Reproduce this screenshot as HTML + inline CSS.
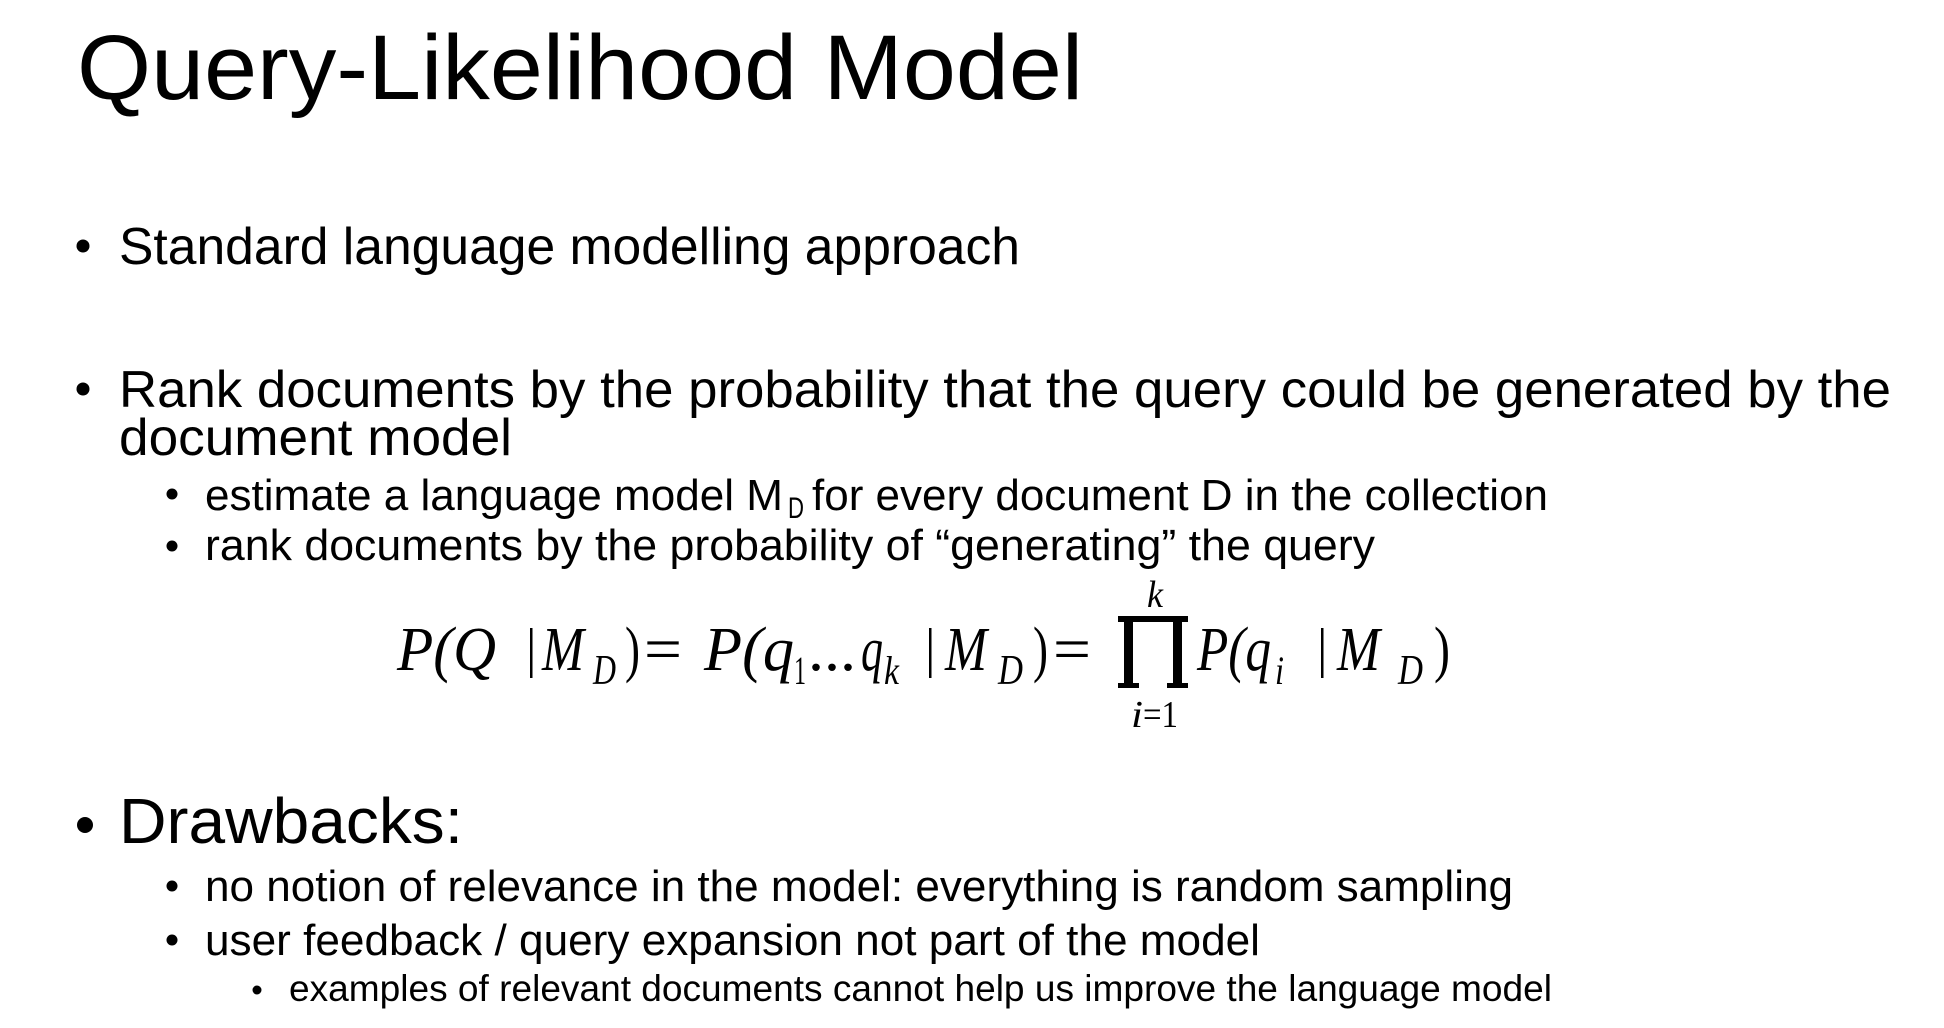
<!DOCTYPE html>
<html><head><meta charset="utf-8"><style>
html,body{margin:0;padding:0;background:#fff;}
svg{display:block}
.s{font-family:"Liberation Sans",sans-serif;fill:#000}
.m{font-family:"Liberation Serif",serif;font-style:italic;fill:#000}
.r{font-family:"Liberation Serif",serif;fill:#000}
</style></head><body>
<svg width="1944" height="1028" viewBox="0 0 1944 1028" xmlns="http://www.w3.org/2000/svg">
<rect width="1944" height="1028" fill="#fff"/>
<text class="s" x="77" y="99" font-size="92" textLength="1006" lengthAdjust="spacingAndGlyphs" style="font-weight:300">Query-Likelihood Model</text>

<circle cx="83" cy="246" r="6.5"/>
<text class="s" x="119" y="264" font-size="52" textLength="901" lengthAdjust="spacingAndGlyphs">Standard language modelling approach</text>

<circle cx="83" cy="389" r="6.5"/>
<text class="s" x="119" y="407" font-size="52" textLength="1772" lengthAdjust="spacingAndGlyphs">Rank documents by the probability that the query could be generated by the</text>
<text class="s" x="119" y="455" font-size="52" textLength="393" lengthAdjust="spacingAndGlyphs">document model</text>

<circle cx="172" cy="494" r="5.5"/>
<text class="s" x="205" y="510" font-size="44" textLength="578" lengthAdjust="spacingAndGlyphs">estimate a language model M</text>
<text class="s" x="788" y="518" font-size="30" textLength="16" lengthAdjust="spacingAndGlyphs">D</text>
<text class="s" x="812" y="510" font-size="44" textLength="736" lengthAdjust="spacingAndGlyphs">for every document D in the collection</text>

<circle cx="172" cy="546" r="5.5"/>
<text class="s" x="205" y="560" font-size="44" textLength="1170" lengthAdjust="spacingAndGlyphs">rank documents by the probability of “generating” the query</text>

<!-- formula -->
<text class="m" x="397" y="670" font-size="62" textLength="99" lengthAdjust="spacingAndGlyphs">P(Q</text>
<rect x="530" y="628" width="2.5" height="50"/>
<text class="m" x="542" y="670" font-size="62" textLength="42" lengthAdjust="spacingAndGlyphs">M</text>
<text class="m" x="593" y="684" font-size="42" textLength="23" lengthAdjust="spacingAndGlyphs">D</text>
<text class="r" x="625" y="670" font-size="62" textLength="15" lengthAdjust="spacingAndGlyphs">)</text>
<text class="r" x="644" y="670" font-size="62" textLength="38" lengthAdjust="spacingAndGlyphs">=</text>
<text class="m" x="704" y="670" font-size="62" textLength="90" lengthAdjust="spacingAndGlyphs">P(q</text>
<text class="r" x="794" y="684" font-size="40" textLength="12" lengthAdjust="spacingAndGlyphs">1</text>
<text class="r" x="808" y="670" font-size="62" textLength="48" lengthAdjust="spacingAndGlyphs">...</text>
<text class="m" x="861" y="670" font-size="62" textLength="22" lengthAdjust="spacingAndGlyphs">q</text>
<text class="m" x="884" y="684" font-size="40" textLength="15" lengthAdjust="spacingAndGlyphs">k</text>
<rect x="929" y="628" width="2.5" height="50"/>
<text class="m" x="945" y="670" font-size="62" textLength="42" lengthAdjust="spacingAndGlyphs">M</text>
<text class="m" x="998" y="684" font-size="42" textLength="25" lengthAdjust="spacingAndGlyphs">D</text>
<text class="r" x="1033" y="670" font-size="62" textLength="15" lengthAdjust="spacingAndGlyphs">)</text>
<text class="r" x="1053" y="670" font-size="62" textLength="38" lengthAdjust="spacingAndGlyphs">=</text>
<rect x="1118" y="616" width="70" height="6"/>
<rect x="1124" y="616" width="9" height="72"/>
<rect x="1173" y="616" width="9" height="72"/>
<rect x="1118" y="683" width="21" height="5"/>
<rect x="1167" y="683" width="21" height="5"/>
<text class="m" x="1147" y="607" font-size="38" textLength="16" lengthAdjust="spacingAndGlyphs">k</text>
<text class="m" x="1131" y="727" font-size="38" textLength="12" lengthAdjust="spacingAndGlyphs">i</text>
<text class="r" x="1143" y="727" font-size="38" textLength="35" lengthAdjust="spacingAndGlyphs">=1</text>
<text class="m" x="1197" y="670" font-size="62" textLength="74" lengthAdjust="spacingAndGlyphs">P(q</text>
<text class="m" x="1275" y="684" font-size="40" textLength="9" lengthAdjust="spacingAndGlyphs">i</text>
<rect x="1321" y="628" width="2.5" height="50"/>
<text class="m" x="1337" y="670" font-size="62" textLength="43" lengthAdjust="spacingAndGlyphs">M</text>
<text class="m" x="1398" y="684" font-size="42" textLength="25" lengthAdjust="spacingAndGlyphs">D</text>
<text class="r" x="1434" y="670" font-size="62" textLength="16" lengthAdjust="spacingAndGlyphs">)</text>

<circle cx="85" cy="825" r="8"/>
<text class="s" x="119" y="843" font-size="64" textLength="344" lengthAdjust="spacingAndGlyphs">Drawbacks:</text>

<circle cx="172" cy="886" r="5.5"/>
<text class="s" x="205" y="901" font-size="44" textLength="1308" lengthAdjust="spacingAndGlyphs">no notion of relevance in the model: everything is random sampling</text>

<circle cx="172" cy="940" r="5.5"/>
<text class="s" x="205" y="955" font-size="44" textLength="1055" lengthAdjust="spacingAndGlyphs">user feedback / query expansion not part of the model</text>

<circle cx="257" cy="990" r="4.5"/>
<text class="s" x="289" y="1001" font-size="37" textLength="1263" lengthAdjust="spacingAndGlyphs">examples of relevant documents cannot help us improve the language model</text>
</svg>
</body></html>
